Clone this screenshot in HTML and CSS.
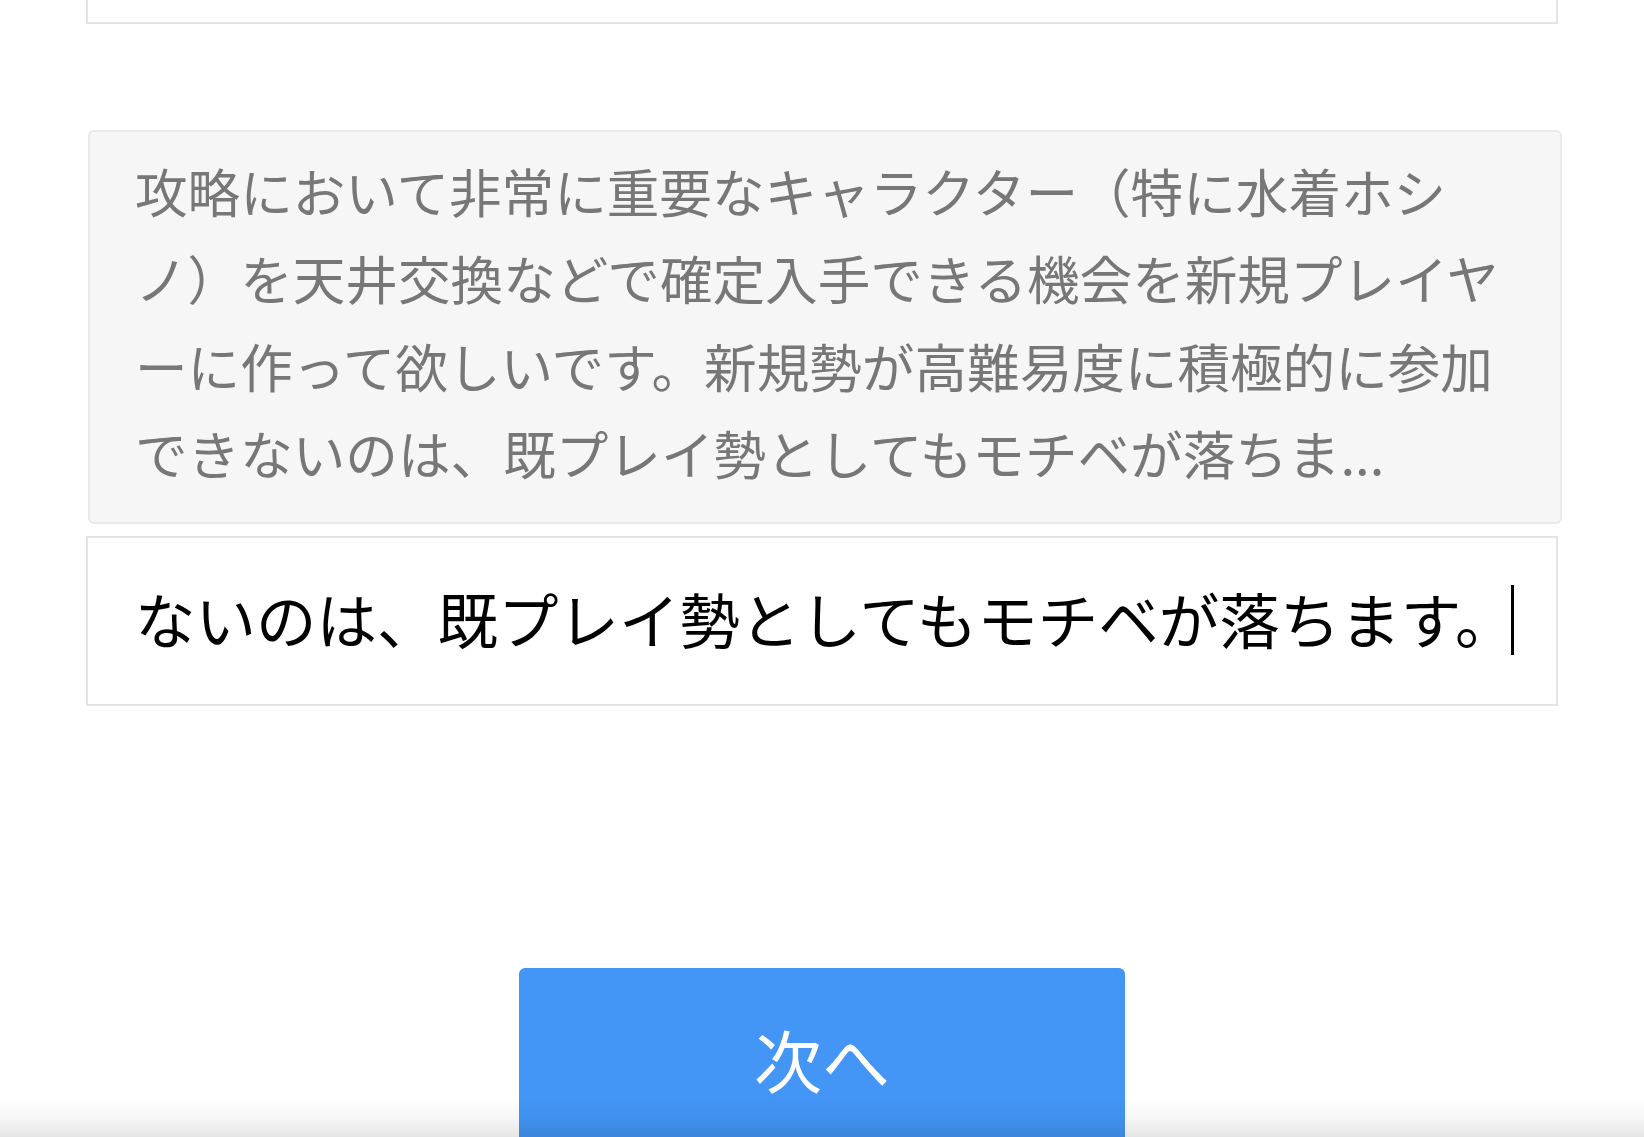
FILE: index.html
```html
<!DOCTYPE html>
<html lang="ja">
<head>
<meta charset="utf-8">
<title>回答</title>
<link rel="stylesheet" href="styles.css">
</head>
<body>
<main class="page">
  <div class="prev-field"></div>
  <div class="answer-preview">
    <p class="preview-text">攻略において非常に重要なキャラクター（特に水着ホシノ）を天井交換などで確定入手できる機会を新規プレイヤーに作って欲しいです。新規勢が高難易度に積極的に参加できないのは、既プレイ勢としてもモチベが落ちま...</p>
  </div>
  <div class="answer-input">
    <span class="input-text">ないのは、既プレイ勢としてもモチベが落ちます。</span><span class="caret"></span>
  </div>
  <div class="actions">
    <button class="next-btn" type="button">次へ</button>
  </div>
</main>
<div class="bottom-shade"></div>
</body>
</html>
```
FILE: styles.css
```css
html, body {
  margin: 0;
  padding: 0;
  background: #ffffff;
  font-family: "Noto Sans CJK JP", "Noto Sans", sans-serif;
  overflow: hidden;
  text-spacing-trim: space-all;
}

.page {
  display: flex;
  flex-direction: column;
  padding-left: 86px;
  width: 1472px;
}

.prev-field {
  height: 22px;
  border: 2px solid #e4e4e4;
  border-top: none;
  background: #fff;
}

.answer-preview {
  margin-top: 106px;
  margin-left: 2px;
  width: 1474px;
  box-sizing: border-box;
  background: #f6f6f6;
  border: 2px solid #e9e9e9;
  border-radius: 6px;
  padding: 15px 46px 25px 45px;
}

.preview-text {
  margin: 0;
  font-size: 52.6px;
  line-height: 87.4px;
  color: #777777;
  text-spacing-trim: space-all;
}

.answer-input {
  margin-top: 12px;
  height: 170px;
  box-sizing: border-box;
  border: 2px solid #e4e4e4;
  background: #fff;
  display: flex;
  align-items: center;
  padding: 0 0 6px 47px;
  overflow: hidden;
  white-space: nowrap;
}

.input-text {
  font-size: 60.5px;
  line-height: 72px;
  color: #000;
  text-spacing-trim: space-all;
}

.caret {
  display: inline-block;
  width: 3px;
  height: 70px;
  background: #000;
  margin-left: -5px;
  margin-top: 4px;
}

.actions {
  display: flex;
  justify-content: center;
  margin-top: 262px;
  width: 1472px;
}

.next-btn {
  width: 606px;
  height: 182px;
  border: none;
  border-radius: 6px;
  background: #4396f6;
  color: #ffffff;
  font-family: "Noto Sans CJK JP", "Noto Sans", sans-serif;
  font-size: 68px;
  padding: 0;
}

.bottom-shade {
  position: fixed;
  left: 0;
  right: 0;
  bottom: 0;
  height: 40px;
  background: linear-gradient(to bottom, rgba(0,0,0,0) 0%, rgba(0,0,0,0.03) 50%, rgba(0,0,0,0.1) 100%);
  pointer-events: none;
}
```
